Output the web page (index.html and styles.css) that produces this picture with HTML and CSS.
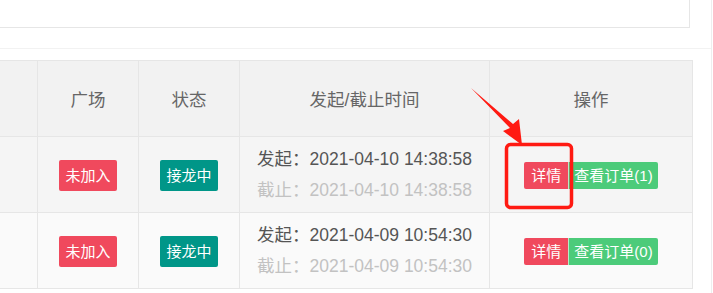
FILE: index.html
```html
<!DOCTYPE html>
<html lang="zh-CN">
<head>
    <meta charset="UTF-8">
    <meta name="viewport" content="width=device-width, initial-scale=1.0">
    <title>接龙列表</title>
    <link rel="stylesheet" href="styles.css">
</head>
<body>

    <div class="panel">
        <!-- 搜索区 -->
        <div class="search-card"></div>
        <div class="panel-line"></div>

        <!-- 列表 -->
        <div class="grid">
            <div class="row head">
                <div class="cell"></div>
                <div class="cell">广场</div>
                <div class="cell">状态</div>
                <div class="cell">发起/截止时间</div>
                <div class="cell">操作</div>
            </div>
            <div class="row odd">
                <div class="cell"></div>
                <div class="cell"><span class="tag red">未加入</span></div>
                <div class="cell"><span class="tag teal">接龙中</span></div>
                <div class="cell time">
                    <p>发起：2021-04-10 14:38:58</p>
                    <p class="end">截止：2021-04-10 14:38:58</p>
                </div>
                <div class="cell">
                    <div class="btns">
                        <a class="btn red" href="#">详情</a><a class="btn green" href="#">查看订单(1)</a>
                    </div>
                </div>
            </div>
            <div class="row even">
                <div class="cell"></div>
                <div class="cell"><span class="tag red">未加入</span></div>
                <div class="cell"><span class="tag teal">接龙中</span></div>
                <div class="cell time">
                    <p>发起：2021-04-09 10:54:30</p>
                    <p class="end">截止：2021-04-09 10:54:30</p>
                </div>
                <div class="cell">
                    <div class="btns">
                        <a class="btn red" href="#">详情</a><a class="btn green" href="#">查看订单(0)</a>
                    </div>
                </div>
            </div>
        </div>
    </div>

    <!-- 标注 -->
    <svg class="mark" width="713" height="293" viewBox="0 0 713 293">
        <polygon points="471,88 513,124 519,119 522,145 503,131 510,128" fill="#ff1a12"/>
        <rect x="506.5" y="144.5" width="65" height="63" rx="4" fill="none" stroke="#ff1a12" stroke-width="3.5"/>
    </svg>

</body>
</html>
```

FILE: styles.css
```css
* {
    margin: 0;
    padding: 0;
    box-sizing: border-box;
}
body {
    font-family: "Liberation Sans", "Noto Sans CJK SC", sans-serif;
    background-color: #fff;
    color: #666;
    width: 713px;
    height: 293px;
    overflow: hidden;
    position: relative;
}

/* Panel */
.panel {
    width: 712px;
    height: 293px;
    border-right: 1px solid #eee;
}
.search-card {
    width: 690px;
    height: 28px;
    border-right: 1px solid #e6e6e6;
    border-bottom: 1px solid #e6e6e6;
}
.panel-line {
    height: 21px;
    border-bottom: 1px solid #f2f2f2;
    margin-bottom: 11px;
}

/* Table */
.grid {
    width: 693px;
    border-top: 1px solid #e6e6e6;
}
.row {
    display: grid;
    grid-template-columns: 38px 101px 101px 250px 203px;
    height: 76px;
    border-bottom: 1px solid #e6e6e6;
}
.row.head {
    background-color: #f2f2f2;
    font-size: 17.5px;
}
.row.odd {
    background-color: #f5f5f5;
}
.row.even {
    background-color: #fafafa;
}
.cell {
    border-right: 1px solid #e6e6e6;
    display: flex;
    justify-content: center;
    align-items: center;
}

/* Tags */
.tag {
    display: inline-block;
    height: 31px;
    line-height: 31px;
    padding: 0 6.5px;
    font-size: 15px;
    color: #fff;
    border-radius: 2px;
    margin-top: 1px;
}
.tag.red {
    background-color: #f0495d;
}
.tag.teal {
    background-color: #009688;
}

/* Time */
.cell.time {
    flex-direction: column;
    align-items: flex-start;
    padding-left: 17px;
    font-size: 17.5px;
    line-height: 31px;
    color: #555;
}
.cell.time .end {
    color: #c2c2c2;
}

/* Buttons */
.btns {
    display: flex;
    margin-top: 1px;
}
.btn {
    display: inline-block;
    height: 27px;
    line-height: 27px;
    padding: 0 7px;
    font-size: 15px;
    color: #fff;
    text-decoration: none;
}
.btn.red {
    background-color: #f0495d;
    border-radius: 2px 0 0 2px;
}
.btn.green {
    padding: 0 5px;
    background-color: #4ccb7a;
    border-left: 1px solid #b8e8c8;
    border-radius: 0 2px 2px 0;
}

/* Annotation */
.mark {
    position: absolute;
    left: 0;
    top: 0;
    pointer-events: none;
}
```
